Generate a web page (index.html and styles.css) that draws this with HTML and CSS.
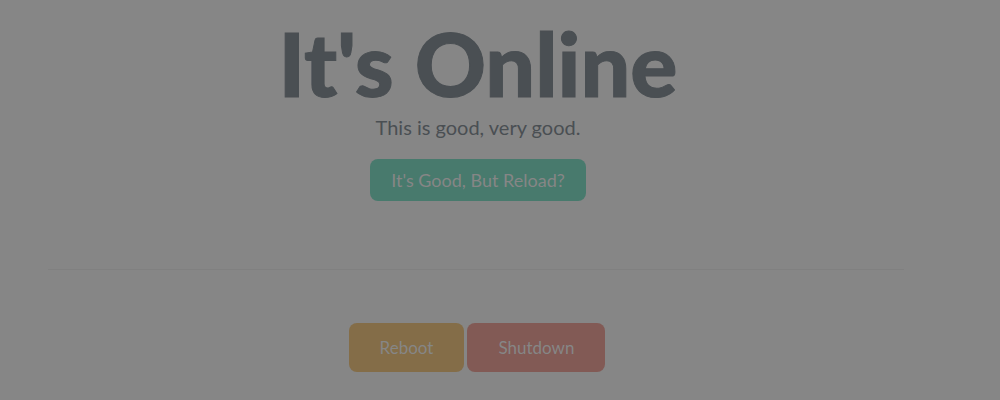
FILE: index.html
```
<!DOCTYPE html>
<html lang="en">
<head>
<meta charset="utf-8">
<title>It's Online</title>
<link rel="stylesheet" href="styles.css">
</head>
<body>
<main class="page">
  <section class="status">
    <h1 class="title">It's Online</h1>
    <p class="lead">This is good, very good.</p>
    <button class="btn btn-reload" type="button">It's Good, But Reload?</button>
  </section>
  <hr class="divider">
  <section class="actions">
    <button class="btn btn-large btn-reboot" type="button">Reboot</button>
    <button class="btn btn-large btn-shutdown" type="button">Shutdown</button>
  </section>
</main>
</body>
</html>
```
FILE: styles.css
```
* {
  box-sizing: border-box;
}

body {
  margin: 0;
  background: #868686;
  color: #4a4f53;
  font-family: Lato, "Liberation Sans", sans-serif;
}

.page {
  padding: 15px 96px 28px 48px;
}

.status {
  display: flex;
  flex-direction: column;
  align-items: center;
  padding-left: 4px;
}

.title {
  margin: 0;
  font-size: 88px;
  font-weight: 900;
  line-height: 97px;
  -webkit-text-stroke: 1px #4a4f53;
}

.lead {
  margin: 0 0 16px;
  font-size: 20px;
  line-height: 31px;
}

.btn {
  border: 0;
  border-radius: 8px;
  padding: 10px 21px;
  color: #868686;
  font-family: inherit;
  font-size: 18px;
  line-height: 22px;
  cursor: pointer;
}

.btn-reload {
  background: #487a6d;
}

.divider {
  margin: 68px 0 53px;
  border: 0;
  border-top: 1px solid #808080;
}

.actions {
  display: flex;
  justify-content: center;
  gap: 3px;
  padding-left: 2px;
}

.btn-large {
  padding: 14px 31px;
  font-size: 17px;
  line-height: 21px;
}

.btn-reboot {
  background: #846d48;
}

.btn-shutdown {
  background: #825a55;
}
```
